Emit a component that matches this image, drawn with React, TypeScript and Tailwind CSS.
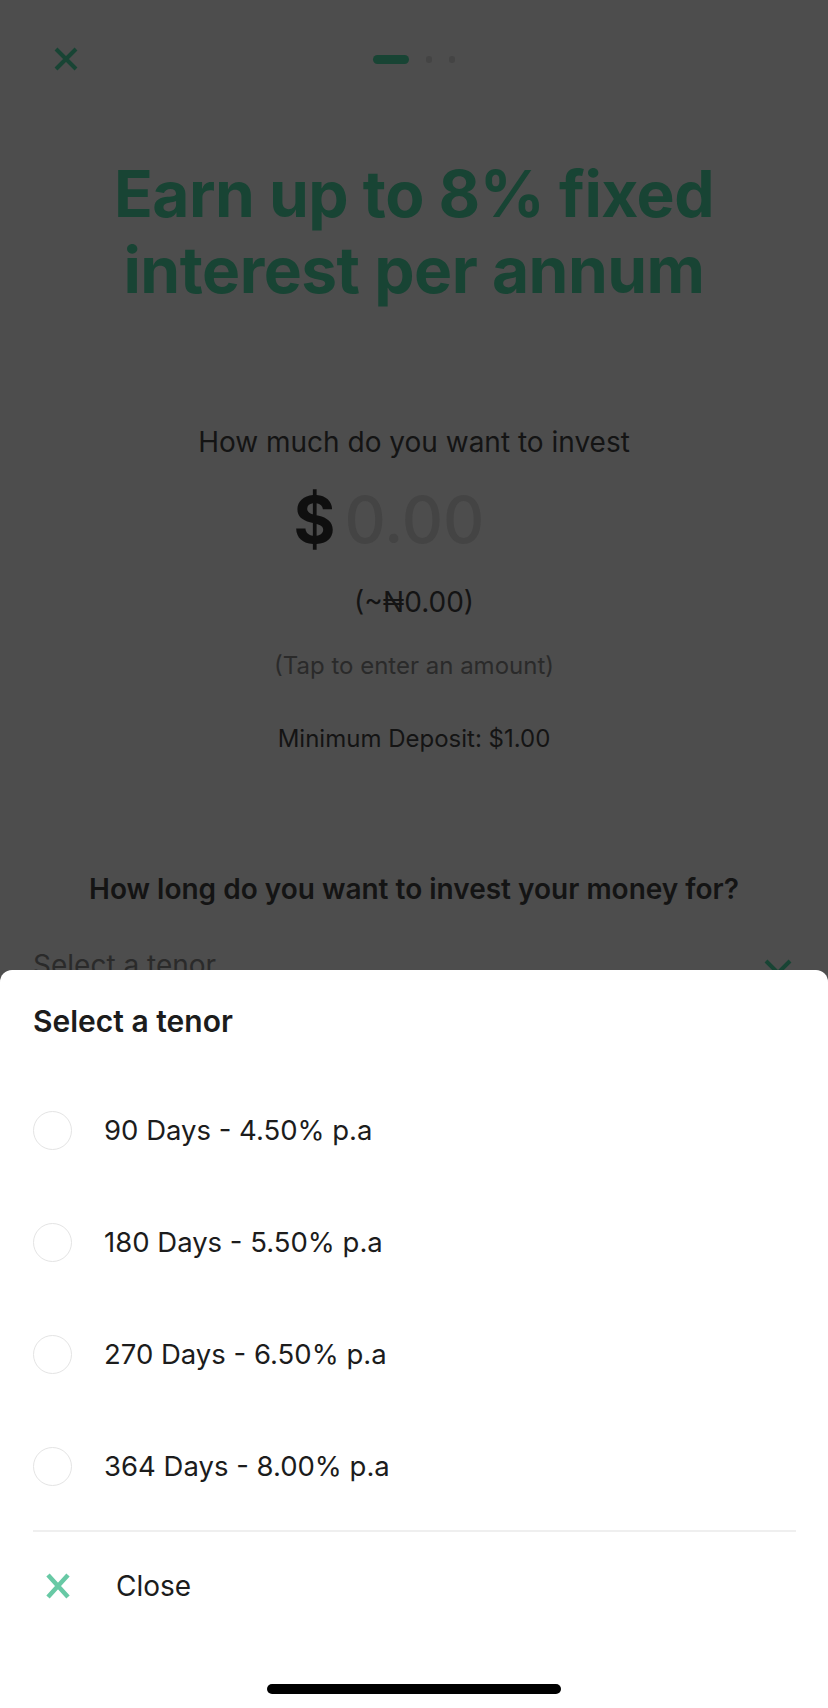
import React from "react";

const options = [
  "90 Days - 4.50% p.a",
  "180 Days - 5.50% p.a",
  "270 Days - 6.50% p.a",
  "364 Days - 8.00% p.a",
];

export default function App() {
  return (
    <div
      className="relative w-[828px] h-[1708px] overflow-hidden bg-[#4d4d4d]"
      style={{ fontFamily: "Inter, 'Noto Sans', sans-serif" }}
    >
      {/* Dimmed page */}
      <div className="flex flex-col">
        <div className="relative flex h-[26px] items-center mt-[46px] px-[53px]">
          <svg width="26" height="26" viewBox="0 0 26 26" className="shrink-0">
            <path d="M3 3 L23 23 M23 3 L3 23" stroke="#184434" strokeWidth="4" strokeLinecap="butt" />
          </svg>
          <div className="absolute left-0 right-0 flex justify-center gap-[17px] items-center">
            <div className="h-[9px] w-[36px] rounded-full bg-[#184434]" />
            <div className="h-[7px] w-[6px] rounded-full bg-[#444444]" />
            <div className="h-[7px] w-[6px] rounded-full bg-[#444444]" />
          </div>
        </div>

        <h1 className="mt-[84px] text-center text-[64px] leading-[76px] font-bold tracking-[-0.5px] text-[#184434]">
          Earn up to 8% fixed
          <br />
          interest per annum
        </h1>

        <p className="mt-[117px] text-center text-[28px] leading-[34px] text-[#141414]">
          How much do you want to invest
        </p>

        <div className="mt-[29px] flex justify-center">
          <div className="flex items-baseline gap-[9px] h-[64px] leading-[64px] text-[64px]">
            <span className="font-bold text-[#0f0f0f]">$</span>
            <span className="w-[190px] text-[#444444] font-medium">0.00</span>
          </div>
        </div>

        <p className="mt-[33px] text-center text-[28px] leading-[34px] text-[#141414]">(~₦0.00)</p>

        <p className="mt-[32px] text-center text-[24px] leading-[30px] text-[#2a2a2a]">
          (Tap to enter an amount)
        </p>

        <p className="mt-[43px] text-center text-[24px] leading-[30px] text-[#141414]">
          Minimum Deposit: $1.00
        </p>

        <p className="mt-[118px] text-center text-[28px] leading-[34px] font-semibold text-[#141414]">
          How long do you want to invest your money for?
        </p>

        <div className="mt-[42px] flex items-start justify-between px-[33px]">
          <span className="text-[28px] leading-[34px] text-[#2a2a2a]">Select a tenor</span>
          <svg width="30" height="20" viewBox="0 0 30 20" className="mt-[10px] mr-[2px]">
            <path d="M3 3 L15 15 L27 3" stroke="#184434" strokeWidth="4" fill="none" />
          </svg>
        </div>
      </div>

      {/* Bottom sheet */}
      <div className="absolute bottom-0 left-0 right-0 h-[738px] rounded-t-[12px] bg-white flex flex-col">
        <div className="px-[33px] pt-[33px]">
          <h2 className="text-[30px] leading-[36px] font-semibold text-[#1c1c1c]">Select a tenor</h2>
        </div>
        <div className="mt-[35px] flex flex-col px-[33px]">
          {options.map((o) => (
            <div key={o} className="flex h-[112px] items-center gap-[32px]">
              <div className="h-[39px] w-[39px] shrink-0 rounded-full border-[1.5px] border-[#e4e4e4]" />
              <span className="text-[27.5px] leading-[34px] text-[#1c1c1c]">{o}</span>
            </div>
          ))}
        </div>
        <div className="ml-[33px] mr-[32px] mt-[8px] h-[2px] bg-[#efefef]" />
        <div className="flex h-[108px] items-center px-[45px] gap-[45px]">
          <svg width="26" height="26" viewBox="0 0 26 26" className="shrink-0">
            <path d="M3 2 L23 24 M23 2 L3 24" stroke="#68c9a5" strokeWidth="4.5" />
          </svg>
          <span className="text-[28px] leading-[34px] text-[#1c1c1c]">Close</span>
        </div>
        <div className="mt-auto mb-[14px] flex justify-center">
          <div className="h-[10px] w-[294px] rounded-full bg-black" />
        </div>
      </div>
    </div>
  );
}
